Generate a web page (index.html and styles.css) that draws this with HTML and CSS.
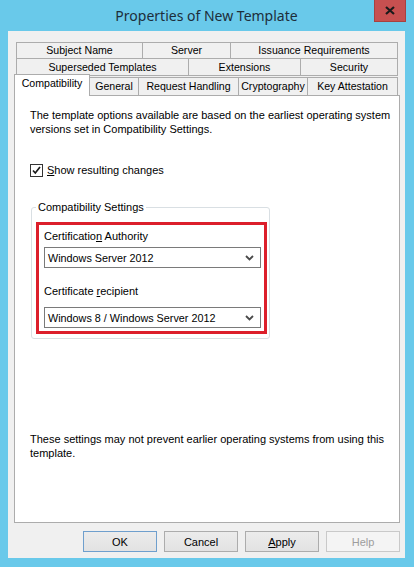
FILE: index.html
```html
<!DOCTYPE html>
<html lang="en">
<head>
<meta charset="utf-8">
<title>Properties of New Template</title>
<link rel="stylesheet" href="styles.css">
</head>
<body>
<div class="window">
  <div class="titlebar">
    <div class="title">Properties of New Template</div>
    <div class="close">
      <svg width="10" height="9" viewBox="0 0 10 9"><path d="M1 1 L9 8 M9 1 L1 8" stroke="#1a1a1a" stroke-width="2.2" fill="none"/></svg>
    </div>
  </div>
  <div class="client">
    <div class="tabs">
      <div class="tabrow">
        <div class="tab t-subject">Subject Name</div>
        <div class="tab t-server">Server</div>
        <div class="tab t-issuance">Issuance Requirements</div>
      </div>
      <div class="tabrow row2">
        <div class="tab t-superseded">Superseded Templates</div>
        <div class="tab t-extensions">Extensions</div>
        <div class="tab t-security">Security</div>
      </div>
      <div class="tabrow front">
        <div class="tab active t-compat">Compatibility</div>
        <div class="tab t-general">General</div>
        <div class="tab t-request">Request Handling</div>
        <div class="tab t-crypto">Cryptography</div>
        <div class="tab t-key">Key Attestation</div>
      </div>
    </div>
    <div class="panel">
      <p class="intro">The template options available are based on the earliest operating system<br>versions set in Compatibility Settings.</p>
      <div class="check">
        <span class="box">
          <svg width="11" height="11" viewBox="0 0 11 11"><path d="M2 5.5 L4.3 8 L9 2" stroke="#1a1a1a" stroke-width="1.7" fill="none"/></svg>
        </span>
        <span class="check-label"><u>S</u>how resulting changes</span>
      </div>
      <fieldset class="group">
        <legend>Compatibility Settings</legend>
        <div class="highlight">
          <div class="field-label">Certificatio<u>n</u> Authority</div>
          <div class="combo">
            <span>Windows Server 2012</span>
            <svg width="9" height="6" viewBox="0 0 9 6"><path d="M1 1 L4.5 4.5 L8 1" stroke="#4a4a4a" stroke-width="1.8" fill="none"/></svg>
          </div>
          <div class="field-label second">Certificate <u>r</u>ecipient</div>
          <div class="combo combo2">
            <span>Windows 8 / Windows Server 2012</span>
            <svg width="9" height="6" viewBox="0 0 9 6"><path d="M1 1 L4.5 4.5 L8 1" stroke="#4a4a4a" stroke-width="1.8" fill="none"/></svg>
          </div>
        </div>
      </fieldset>
      <p class="note">These settings may not prevent earlier operating systems from using this<br>template.</p>
    </div>
    <div class="buttons">
      <div class="btn default">OK</div>
      <div class="btn">Cancel</div>
      <div class="btn"><u>A</u>pply</div>
      <div class="btn disabled">Help</div>
    </div>
  </div>
</div>
</body>
</html>
```
FILE: styles.css
```css
* { box-sizing: border-box; }
body {
  margin: 0;
  background: #69c9ea;
  font-family: "Liberation Sans", Arial, sans-serif;
  font-size: 11px;
  color: #000;
}
.window {
  width: 414px;
  height: 567px;
  display: flex;
  flex-direction: column;
}
.titlebar {
  height: 31px;
  position: relative;
  display: flex;
  justify-content: center;
}
.title {
  font-family: "Noto Sans", "Open Sans", sans-serif;
  font-size: 14px;
  line-height: 31px;
  color: #1d2e3b;
  padding-right: 1px;
}
.close {
  position: absolute;
  top: 0;
  right: 8px;
  width: 32px;
  height: 22px;
  background: #c75050;
  border: 1px solid #a84040;
  border-top: none;
  display: flex;
  align-items: center;
  justify-content: center;
}
.client {
  margin-left: 8px;
  width: 397px;
  height: 527px;
  background: #f0f0f0;
  display: flex;
  flex-direction: column;
}
.tabs {
  margin-top: 11px;
  margin-left: 8px;
}
.tabrow {
  display: flex;
  height: 17px;
}
.row2 {
  margin-top: -1px;
  height: 18px;
}
.front {
  margin-top: -2px;
  margin-left: -2px;
  height: 21px;
  align-items: flex-end;
}
.tab {
  height: 100%;
  border: 1px solid #acacac;
  background: #f0f0f0;
  display: flex;
  align-items: center;
  justify-content: center;
  line-height: 13px;
  white-space: nowrap;
  font-size: 10.6px;
}
.tab + .tab { margin-left: -1px; }
.front .tab {
  height: 18px;
  border-bottom: none;
}
.front .tab.active {
  height: 22px;
  margin-bottom: -1px;
  background: #fff;
  position: relative;
  z-index: 1;
  padding-bottom: 4px;
}
.t-subject { width: 127px; }
.t-server { width: 89px; }
.t-issuance { width: 168px; }
.t-superseded { width: 173px; }
.t-extensions { width: 113px; }
.t-security { width: 98px; }
.t-compat { width: 76px; }
.t-general { width: 50px; }
.t-request { width: 101px; }
.t-crypto { width: 70px; }
.t-key { width: 91px; }

.panel {
  margin-left: 6px;
  width: 386px;
  height: 428px;
  background: #fff;
  border: 1px solid #acacac;
  padding: 0 0 0 15px;
}
.intro {
  margin: 12px 0 0;
  line-height: 14px;
}
.check {
  margin-top: 28px;
  display: flex;
  align-items: center;
  height: 13px;
}
.box {
  width: 13px;
  height: 13px;
  border: 1px solid #333;
  background: #fff;
  display: flex;
  align-items: center;
  justify-content: center;
}
.check-label {
  margin-left: 4px;
  line-height: 13px;
}
.group {
  margin: 24px 0 0 1px;
  width: 239px;
  padding: 0 2px 4px 4px;
  border: 1px solid #d9dfe3;
  border-radius: 3px;
}
.group legend {
  padding: 0 2px;
  line-height: 12px;
}
.highlight {
  margin-top: 9px;
  border: 3px solid #dc1f2b;
  height: 112px;
  padding: 4px 3px 0 5px;
}
.field-label {
  line-height: 14px;
}
.field-label.second { margin-top: 16px; }
.combo {
  margin-top: 4px;
  height: 21px;
  border: 1px solid #7a7a7a;
  background: #fff;
  display: flex;
  align-items: center;
  justify-content: space-between;
  padding: 0 6px 0 3px;
  font-size: 10.8px;
}
.combo2 { margin-top: 9px; }
.note {
  margin: 93px 0 0;
  line-height: 14px;
}
.buttons {
  display: flex;
  justify-content: flex-end;
  gap: 7px;
  margin-top: 8px;
  padding-right: 5px;
}
.btn {
  width: 74px;
  height: 21px;
  border: 1px solid #acacac;
  background: linear-gradient(#ececec, #e2e2e2);
  display: flex;
  align-items: center;
  justify-content: center;
}
.btn.default { border-color: #6f9fcd; }
.btn.disabled {
  border-color: #c9c9c9;
  background: #f4f4f4;
  color: #9d9d9d;
}
```
